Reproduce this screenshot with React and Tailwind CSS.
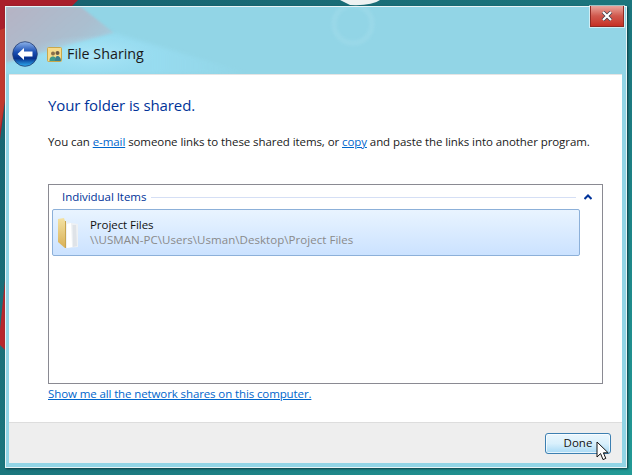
export default function App() {
  return (
    <div className="relative w-[632px] h-[475px] overflow-hidden bg-[#1f7c85] font-['Open_Sans',sans-serif]">
      {/* wallpaper */}
      <svg className="absolute inset-0" width="632" height="475" viewBox="0 0 632 475">
        <defs>
          <linearGradient id="wall" x1="0" y1="0" x2="1" y2="1">
            <stop offset="0" stopColor="#17616f" />
            <stop offset="0.6" stopColor="#1c7a80" />
            <stop offset="1" stopColor="#229a96" />
          </linearGradient>
        </defs>
        <rect width="632" height="475" fill="url(#wall)" />
        <path d="M0 0H78L72 6H10L5 100L0 140Z" fill="#a91f2c" />
        <path d="M0 30L5 28V100L0 130Z" fill="#c0392f" />
        <path d="M0 330L5 280V350L0 345Z" fill="#b8272d" />
        <path d="M340 0H380Q372 6 350 5Z" fill="#eef2f2" />
      </svg>
      <div className="relative mt-[6px] ml-[5px] w-[622px] h-[462px] flex flex-col border border-[#e8f4f6] bg-[#92d5e6] shadow-[1px_1px_2px_#0c3b44] overflow-hidden">
        {/* glass highlights */}
        <svg className="absolute top-0 left-0" width="620" height="67" viewBox="0 0 620 67">
          <defs>
            <linearGradient id="gr" x1="0" y1="0" x2="1" y2="0.6">
              <stop offset="0" stopColor="#b6b3c4" />
              <stop offset="0.7" stopColor="#aabfd0" />
              <stop offset="1" stopColor="#a3cbdc" />
            </linearGradient>
            <linearGradient id="fade" x1="0" y1="0" x2="1" y2="0">
              <stop offset="0" stopColor="#9be0f6" />
              <stop offset="0.6" stopColor="#9be0f6" />
              <stop offset="1" stopColor="#9be0f6" stopOpacity="0" />
            </linearGradient>
            <radialGradient id="glow" cx="0.5" cy="0.5" r="0.5">
              <stop offset="0" stopColor="#b0e8f8" stopOpacity="0.9" />
              <stop offset="1" stopColor="#a5e4f8" stopOpacity="0" />
            </radialGradient>
          </defs>
          <path d="M0 0H75L108 26L0 56Z" fill="url(#gr)" className="blur-[1px]" />
          <path d="M108 26L245 67H0V56Z" fill="url(#fade)" opacity="0.6" className="blur-[2px]" />
          <ellipse cx="85" cy="48" rx="65" ry="20" fill="url(#glow)" />
          <circle cx="347" cy="17" r="19" fill="none" stroke="#a0dbea" strokeWidth="5" opacity="0.6" className="blur-[1.5px]" />
        </svg>
        <div className="relative h-[67px] shrink-0 flex items-end pb-[7px] pl-[6px]">
          <svg width="26" height="26" viewBox="0 0 26 26" className="shrink-0">
            <defs>
              <linearGradient id="bk" x1="0" y1="0" x2="0" y2="1">
                <stop offset="0" stopColor="#8fb4ea" />
                <stop offset="0.42" stopColor="#1a4fb4" />
                <stop offset="0.68" stopColor="#06308c" />
                <stop offset="1" stopColor="#2fb0f4" />
              </linearGradient>
            </defs>
            <circle cx="13" cy="13" r="12.3" fill="url(#bk)" stroke="#243c70" strokeWidth="0.8" />
            <path d="M5.5 13L12 7V10.6H20.5V15.4H12V19Z" fill="#fff" />
          </svg>
          <div className="ml-[9px] mb-[5px] flex items-center gap-[5px]">
            <svg width="15" height="15" viewBox="0 0 15 15" className="shrink-0">
              <rect x="0.5" y="0.5" width="14" height="14" rx="1" fill="#f6dc8c" stroke="#c9a84c" />
              <circle cx="6" cy="6.5" r="2" fill="#8a6f4a" />
              <path d="M2.5 14C2.5 10.5 4 9.5 6 9.5S9 10.5 9 14Z" fill="#3f9a8a" />
              <circle cx="10.5" cy="6" r="2" fill="#6b5a46" />
              <path d="M8 14C8 10.5 9 9 10.5 9S14 10.5 14 14Z" fill="#3b7f8e" />
            </svg>
            <span className="text-[14.3px] leading-[16px] text-[#1a1a1a]">File Sharing</span>
          </div>
        </div>
        <div className="flex-1 mx-[3px] mr-[4px] bg-white border-t border-[#e4e4e4] flex flex-col pl-[39px] pr-[19px]">
          <h1 className="mt-[20px] text-[15px] leading-[20px] tracking-[-0.1px] text-[#003399] font-normal">Your folder is shared.</h1>
          <p className="mt-[19px] text-[11.5px] leading-[16px] tracking-[-0.08px] text-[#1a1a1a] whitespace-nowrap">
            You can <a className="text-[#0066cc] underline">e-mail</a> someone links to these shared items, or <a className="text-[#0066cc] underline">copy</a> and paste the links into another program.
          </p>
          <div className="mt-[34px] h-[200px] border border-[#8a8a92] px-[3px] pt-[2px]">
            <div className="flex items-center h-[20px] mb-[2px] pl-[10px]">
              <span className="text-[11.5px] tracking-[-0.05px] text-[#003399] whitespace-nowrap">Individual Items</span>
              <div className="ml-[5px] w-[425px] h-px bg-[#d5dff5]" />
              <svg width="8" height="6" viewBox="0 0 8 6" className="ml-[8px]">
                <path d="M0.5 5L4 1.5L7.5 5" fill="none" stroke="#003399" strokeWidth="2" />
              </svg>
            </div>
            <div className="w-[528px] h-[47px] rounded-[2px] border border-[#8cb0d9] bg-gradient-to-b from-[#e9f4ff] to-[#cbe2ff] flex items-center pl-[4px]">
              <svg width="24" height="34" viewBox="0 0 24 34" className="shrink-0">
                <defs>
                  <linearGradient id="fd" x1="0" y1="0" x2="0" y2="1">
                    <stop offset="0" stopColor="#f3e2a4" />
                    <stop offset="1" stopColor="#d9b056" />
                  </linearGradient>
                </defs>
                <path d="M1 3L7 2L8 5V32L1 26Z" fill="url(#fd)" />
                <path d="M8 6L21 8V31L8 32Z" fill="#eef1f4" />
                <path d="M10 8L14 7L15 31L10 32Z" fill="#fff" />
                <path d="M15.5 9L19 9L20 30L16 31Z" fill="#dfe3e8" />
                <path d="M8.5 5V32" stroke="#c8a550" />
              </svg>
              <div className="ml-[9px] mb-[2px] flex flex-col">
                <span className="text-[11.5px] leading-[15px] tracking-[-0.05px] text-[#111]">Project Files</span>
                <span className="text-[11.5px] leading-[15px] tracking-[0.05px] text-[#8a8a8a] whitespace-nowrap">\\USMAN-PC\Users\Usman\Desktop\Project Files</span>
              </div>
            </div>
          </div>
          <a className="mt-[2px] text-[11.5px] leading-[16px] tracking-[-0.11px] text-[#0066cc] underline whitespace-nowrap">Show me all the network shares on this computer.</a>
        </div>
        <div className="h-[41px] shrink-0 mx-[3px] mr-[4px] mb-[4px] bg-[#eeeeee] border-t border-[#dddddd] flex items-center justify-end pr-[11px]">
          <button className="w-[66px] h-[21px] rounded-[3px] border border-[#3c7fb1] bg-gradient-to-b from-[#eaf6fd] via-[#d9f0fc] to-[#a7d9f5] shadow-[inset_0_0_0_1px_#ffffffb0] text-[11.5px] leading-[16px] text-[#111]">Done</button>
        </div>
      </div>
      {/* title bar close */}
      <div className="absolute left-[590px] top-[6px] w-[34px] h-[21px] bg-gradient-to-b from-[#e8a59d] via-[#d0584d] to-[#c62f24] border border-[#8f2a24] border-t-0 outline outline-1 outline-[#ffffff90] flex items-center justify-center">
        <svg width="12" height="10" viewBox="0 0 12 10">
          <path d="M2 1L10 9M10 1L2 9" fill="none" stroke="#3c3c48" strokeWidth="3.6" />
          <path d="M2 1L10 9M10 1L2 9" fill="none" stroke="#fff" strokeWidth="2.2" />
        </svg>
      </div>
      {/* mouse pointer */}
      <svg className="absolute left-[596px] top-[441px]" width="15" height="20" viewBox="0 0 15 20">
        <path d="M1 1V16L4.6 12.6L7 18.6L9.8 17.4L7.4 11.8H12.2Z" fill="#fff" stroke="#111" strokeWidth="1" />
      </svg>
    </div>
  );
}
